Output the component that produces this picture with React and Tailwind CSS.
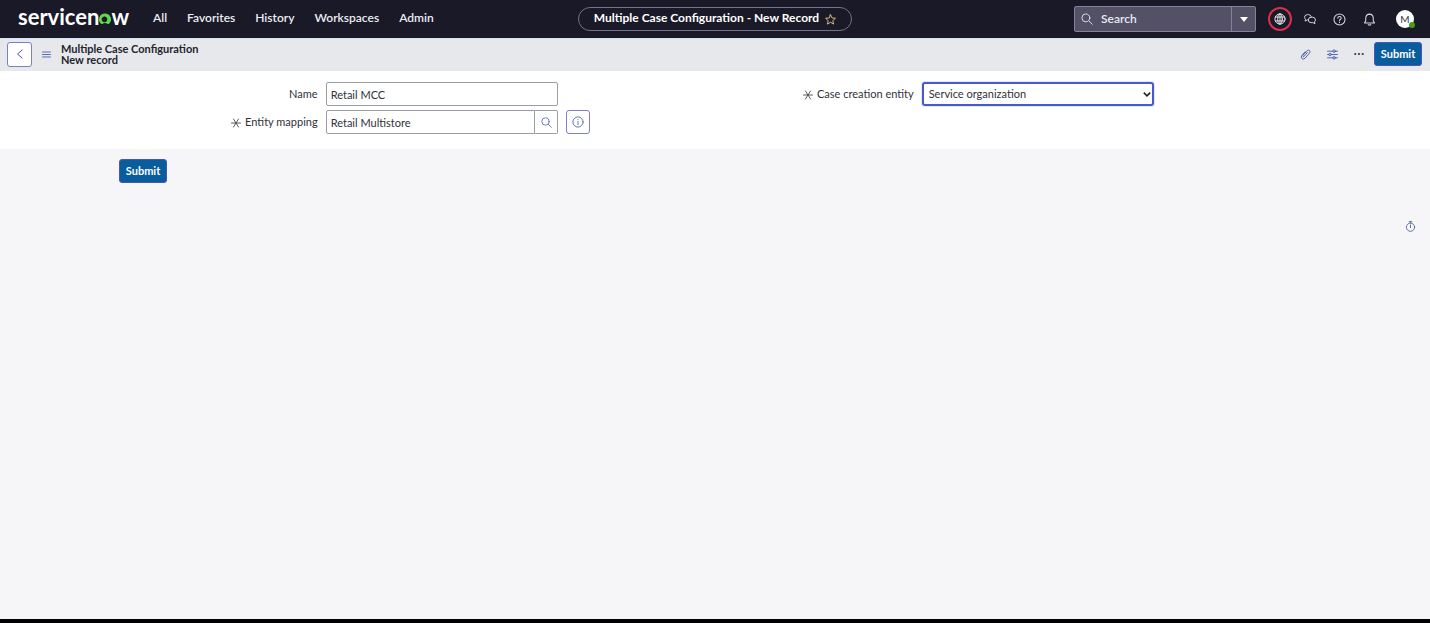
import React from "react";

const navItems = ["All", "Favorites", "History", "Workspaces", "Admin"];

function Svg({ size = 12, box = 16, className = "", children }) {
  return (
    <svg
      width={size}
      height={size}
      viewBox={`0 0 ${box} ${box}`}
      fill="none"
      stroke="currentColor"
      strokeWidth="1.3"
      strokeLinecap="round"
      strokeLinejoin="round"
      className={`shrink-0 ${className}`}
      aria-hidden="true"
    >
      {children}
    </svg>
  );
}

function SearchIcon({ size }) {
  return (
    <Svg size={size}>
      <circle cx="6.5" cy="6.5" r="5.3" />
      <path d="M10.4 10.4L15 15" />
    </Svg>
  );
}

function RequiredMark() {
  return (
    <Svg size={10} className="mr-1 text-[#3f4249]">
      <path strokeWidth="1.4" d="M0.8 8H15.2M4 1.6L12 14.4M12 1.6L4 14.4" />
    </Svg>
  );
}

function Logo() {
  return (
    <a
      href="#home"
      aria-label="servicenow"
      className="flex items-baseline pb-1 text-[22px] leading-6 font-bold text-white"
    >
      <span>servicen</span>
      <svg width="12" height="12" viewBox="0 0 13 12" className="shrink-0" aria-hidden="true">
        <path
          fill="#62d84e"
          d="M6.5 0A6.4 6.4 0 0 0 2.1 11.1C2.6 11.6 3.3 11.6 3.9 11.2C5.4 10.1 7.6 10.1 9.1 11.2C9.7 11.6 10.4 11.6 10.9 11.1A6.4 6.4 0 0 0 6.5 0ZM6.5 9.4A3.1 3.1 0 1 1 6.5 3.3A3.1 3.1 0 0 1 6.5 9.4Z"
        />
      </svg>
      <span>w</span>
    </a>
  );
}

function TopBar() {
  return (
    <header className="grid h-[38px] grid-cols-[1fr_auto_1fr] items-center bg-[#191927] text-white">
      <div className="flex items-center pl-[18px]">
        <Logo />
        <nav className="ml-6 flex gap-5 pb-0.5 text-xs font-semibold text-[#ededf2]">
          {navItems.map((item) => (
            <a key={item} href={`#${item.toLowerCase()}`}>
              {item}
            </a>
          ))}
        </nav>
      </div>
      <div className="flex h-6 w-[274px] items-center justify-center gap-1.5 rounded-full border border-[#74738a] text-xs font-bold">
        <span className="pb-0.5 whitespace-nowrap">Multiple Case Configuration - New Record</span>
        <button type="button" aria-label="Favorite" className="text-[#e8c98a]">
          <Svg size={11}>
            <path d="M8 1L10.1 5.7L15.2 6.2L11.4 9.6L12.5 14.7L8 12L3.5 14.7L4.6 9.6L0.8 6.2L5.9 5.7Z" />
          </Svg>
        </button>
      </div>
      <div className="flex items-center justify-end pr-4">
        <div className="flex h-[26px] w-[182px] items-center rounded-xs border border-[#84829a] bg-[#545167]">
          <label htmlFor="global-search" className="pl-1.5 text-[#dddde6]">
            <SearchIcon size={12} />
          </label>
          <input
            id="global-search"
            type="search"
            aria-label="Search"
            placeholder="Search"
            className="min-w-0 flex-1 bg-transparent pl-2 text-xs font-semibold outline-none placeholder:text-[#e6ecf5]"
          />
          <button
            type="button"
            aria-label="Search options"
            className="flex h-full w-6 items-center justify-center border-l border-[#84829a]"
          >
            <svg width="8" height="5" viewBox="0 0 8 5" fill="white" aria-hidden="true">
              <path d="M0 0H8L4 5Z" />
            </svg>
          </button>
        </div>
        <button
          type="button"
          aria-label="Update set scope"
          className="ml-3 flex size-6 items-center justify-center rounded-full border-2 border-[#d92f50] text-[#e6e6ee]"
        >
          <Svg size={12}>
            <circle cx="8" cy="8" r="6.8" />
            <ellipse cx="8" cy="8" rx="3" ry="6.8" />
            <path d="M1.8 5.4H14.2M1.8 10.6H14.2M8 1.2V14.8" />
          </Svg>
        </button>
        <button type="button" aria-label="Conversations" className="ml-3 text-[#d6d6e0]">
          <Svg size={12}>
            <path d="M5.4 9.2H4.4L1.4 10.8L2 8.2Q0.8 7.2 0.8 5.6Q0.8 2.2 4.4 2.2H6Q8.6 2.2 9.4 4.2" />
            <path d="M9.2 5.6H11.6Q15.2 5.6 15.2 9.2Q15.2 10.8 14 11.8L14.6 14.4L11.8 12.8H9.2Q5.8 12.8 5.8 9.2Q5.8 5.6 9.2 5.6Z" />
          </Svg>
        </button>
        <button type="button" aria-label="Help" className="ml-[17px] text-[#d6d6e0]">
          <Svg size={13}>
            <circle cx="8" cy="8" r="6.8" />
            <path d="M5.9 6.3Q6 4.4 8 4.4Q10.1 4.4 10.1 6.2Q10.1 7.4 8.8 8Q8 8.4 8 9.4M8 11.4V11.6" />
          </Svg>
        </button>
        <button type="button" aria-label="Notifications" className="ml-[17px] text-[#d6d6e0]">
          <Svg size={13}>
            <path d="M1.8 12.2H14.2L12.6 9.8V6.2Q12.4 1.6 8 1.4Q3.6 1.6 3.4 6.2V9.8Z" />
            <path d="M6.4 14.2Q8 15.6 9.6 14.2" />
          </Svg>
        </button>
        <button
          type="button"
          aria-label="User menu"
          className="relative ml-5 size-[18px] rounded-full bg-white text-[10px] leading-4 text-[#33364a]"
        >
          M
          <span className="absolute -right-px bottom-0 size-[6px] rounded-full bg-[#4b9c15]" />
        </button>
      </div>
    </header>
  );
}

function SubmitButton() {
  return (
    <button
      type="submit"
      form="case-config"
      className="block h-6 w-12 rounded-[3px] border border-[#4a55b5] bg-[#085d9c] text-[11px] leading-5 font-bold text-white"
    >
      Submit
    </button>
  );
}

function RecordBar() {
  return (
    <div className="flex h-[33px] items-center border-t border-[#cfe2f6] bg-[#e7e8ec] pr-2 pb-0.5 pl-[7px] text-[#4358a8]">
      <button
        type="button"
        aria-label="Back"
        className="flex size-[25px] items-center justify-center rounded-[3px] border border-[#7880c8] bg-white"
      >
        <Svg size={10}>
          <path strokeWidth="1.6" d="M11.5 1.5L4 8L11.5 14.5" />
        </Svg>
      </button>
      <button type="button" aria-label="Form context menu" className="ml-2.5">
        <Svg size={9}>
          <path strokeWidth="1.5" d="M1 3.6H15M1 8H15M1 12.4H15" />
        </Svg>
      </button>
      <h1 className="ml-2.5 text-[11px] leading-[11px] font-bold text-[#23252e]">
        Multiple Case Configuration
        <span className="block">New record</span>
      </h1>
      <div className="ml-auto flex items-center">
        <button type="button" aria-label="Attachments">
          <Svg size={11}>
            <path d="M10.8 5L6 10.6Q5.2 11.6 4.4 10.8Q3.6 10 4.4 9L10.4 2.4Q12 0.8 13.8 2.2Q15.4 3.8 14 5.8L7.4 13.4Q5 15.8 2.8 14Q0.8 12 2.8 9.4L7.4 4" />
          </Svg>
        </button>
        <button type="button" aria-label="Personalize form" className="ml-4">
          <Svg size={11}>
            <path d="M0.8 3.2H8.4M12.2 3.2H15.2M0.8 8H2.6M6.4 8H15.2M0.8 12.8H8.4M12.2 12.8H15.2" />
            <circle cx="10.3" cy="3.2" r="1.8" />
            <circle cx="4.5" cy="8" r="1.8" />
            <circle cx="10.3" cy="12.8" r="1.8" />
          </Svg>
        </button>
        <button type="button" aria-label="More options" className="mr-2.5 ml-4 text-[#30344c]">
          <svg width="10" height="10" viewBox="0 0 10 10" fill="currentColor" aria-hidden="true">
            <circle cx="1.3" cy="5" r="1.1" />
            <circle cx="5" cy="5" r="1.1" />
            <circle cx="8.7" cy="5" r="1.1" />
          </svg>
        </button>
        <SubmitButton />
      </div>
    </div>
  );
}

function Field({ id, label, required, children }) {
  return (
    <div className="flex h-6 items-center">
      <label htmlFor={id} className="flex w-1/3 items-center justify-end pt-px whitespace-nowrap">
        {required && <RequiredMark />}
        {label}
      </label>
      <div className="ml-2 flex h-full w-[39%]">{children}</div>
    </div>
  );
}

function CaseForm() {
  return (
    <form
      id="case-config"
      onSubmit={(event) => event.preventDefault()}
      className="grid h-[78px] grid-cols-2 items-start bg-white px-[119px] pt-[11px] text-[11px] text-[#2f323b]"
    >
      <div className="flex flex-col gap-1">
        <Field id="name" label="Name">
          <input
            id="name"
            defaultValue="Retail MCC"
            className="h-6 w-full rounded-xs border border-[#9a9da6] px-1 outline-none"
          />
        </Field>
        <Field id="entity-mapping" label="Entity mapping" required>
          <input
            id="entity-mapping"
            defaultValue="Retail Multistore"
            className="h-6 min-w-0 flex-1 rounded-l-xs border border-[#9a9da6] px-1 outline-none"
          />
          <button
            type="button"
            aria-label="Look up entity mapping"
            className="flex h-6 w-[23px] shrink-0 items-center justify-center rounded-r-xs border border-l-0 border-[#9a9da6] text-[#6272b8]"
          >
            <SearchIcon size={11} />
          </button>
          <button
            type="button"
            aria-label="Preview record"
            className="-mr-8 ml-2 flex size-6 shrink-0 items-center justify-center rounded-[3px] border border-[#7d80c8] text-[#6272b8]"
          >
            <Svg size={12}>
              <circle cx="8" cy="8" r="6.8" />
              <path d="M8 7.4V11.4M8 4.8V5" />
            </Svg>
          </button>
        </Field>
      </div>
      <Field id="creation-entity" label="Case creation entity" required>
        <div className="relative h-6 w-full">
          <select
            id="creation-entity"
            className="h-6 w-full appearance-none rounded-[3px] border-2 border-[#4659cf] bg-white px-[5px] ring-1 ring-[#e3e6fb] outline-none"
          >
            <option>Service organization</option>
            <option>Consumer</option>
          </select>
          <svg
            width="8"
            height="5"
            viewBox="0 0 8 5"
            fill="none"
            stroke="#20222b"
            strokeWidth="1.6"
            className="pointer-events-none absolute top-[10px] right-[3px]"
            aria-hidden="true"
          >
            <path d="M0.8 0.6L4 3.8L7.2 0.6" />
          </svg>
        </div>
      </Field>
    </form>
  );
}

export default function App() {
  return (
    <div className="flex min-h-screen flex-col border-b-4 border-black bg-[#f6f6f9] font-['Lato',sans-serif]">
      <TopBar />
      <RecordBar />
      <main className="flex flex-col">
        <CaseForm />
        <div className="px-[119px] pt-2.5">
          <SubmitButton />
        </div>
        <button type="button" aria-label="Response time" className="mt-[38px] mr-3.5 self-end text-[#53659f]">
          <Svg size={11}>
            <circle cx="8" cy="9" r="6" />
            <path d="M8 5.6V9.6M6 1H10M8 1V3" />
          </Svg>
        </button>
      </main>
    </div>
  );
}
